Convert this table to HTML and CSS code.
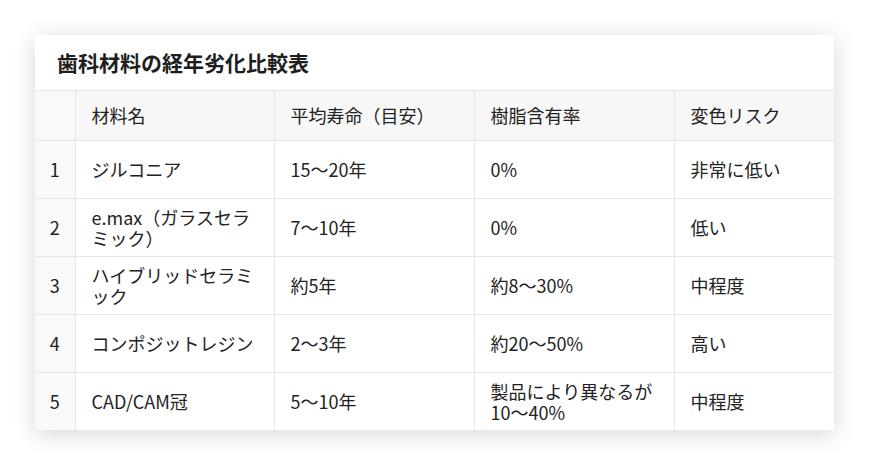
FILE: index.html
```html
<!DOCTYPE html>
<html lang="ja">
<head>
<meta charset="utf-8">
<title>歯科材料の経年劣化比較表</title>
<link rel="stylesheet" href="styles.css">
</head>
<body>
<div class="card">
  <h2 class="card-title">歯科材料の経年劣化比較表</h2>
  <table class="cmp">
    <colgroup>
      <col class="c-no"><col class="c-name"><col class="c-life"><col class="c-resin"><col class="c-risk">
    </colgroup>
    <thead>
      <tr><th class="no"></th><th>材料名</th><th>平均寿命（目安）</th><th>樹脂含有率</th><th>変色リスク</th></tr>
    </thead>
    <tbody>
      <tr><td class="no">1</td><td>ジルコニア</td><td>15〜20年</td><td>0%</td><td>非常に低い</td></tr>
      <tr><td class="no">2</td><td>e.max（ガラスセラミック）</td><td>7〜10年</td><td>0%</td><td>低い</td></tr>
      <tr><td class="no">3</td><td>ハイブリッドセラミック</td><td>約5年</td><td>約8〜30%</td><td>中程度</td></tr>
      <tr><td class="no">4</td><td>コンポジットレジン</td><td>2〜3年</td><td>約20〜50%</td><td>高い</td></tr>
      <tr><td class="no">5</td><td>CAD/CAM冠</td><td>5〜10年</td><td>製品により異なるが10〜40%</td><td>中程度</td></tr>
    </tbody>
  </table>
</div>
</body>
</html>
```

FILE: styles.css
```css
html, body {
  margin: 0;
  padding: 0;
  background: #ffffff;
}
body {
  padding: 35px;
  font-family: "Noto Sans CJK JP", "Noto Sans", sans-serif;
  color: #222222;
}
.card {
  width: 799px;
  background: #ffffff;
  box-shadow: 0 4px 22px rgba(0, 0, 0, 0.16);
}
.card-title {
  margin: 0;
  height: 55px;
  box-sizing: border-box;
  padding: 0 0 0 22px;
  display: flex;
  align-items: center;
  font-size: 21px;
  font-weight: 700;
  line-height: 1;
  color: #1e1e1e;
}
.cmp {
  width: 100%;
  border-collapse: collapse;
  table-layout: fixed;
  font-size: 18px;
  line-height: 21px;
}
.c-no { width: 40px; }
.c-name { width: 199px; }
.c-life { width: 200px; }
.c-resin { width: 200px; }
.c-risk { width: 160px; }
.cmp th, .cmp td {
  border: 1px solid #e6e6e6;
  padding: 0 12px 0 16px;
  text-align: left;
  vertical-align: middle;
  font-weight: 400;
}
.cmp tr > :first-child { border-left: none; }
.cmp tr > :last-child { border-right: none; }
.cmp tbody tr:last-child td { border-bottom: none; }
.cmp thead th {
  height: 49px;
  background: #f7f7f7;
}
.cmp tbody td {
  height: 57px;
}
.cmp .no {
  padding: 0;
  text-align: center;
  background: #f9f9f9;
}
```
